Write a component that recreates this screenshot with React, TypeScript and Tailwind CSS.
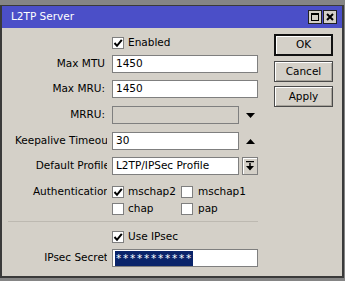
import React from "react";

const font = "font-['DejaVu_Sans',sans-serif]";

function Check({ checked = false }: { checked?: boolean }) {
  return (
    <span className="flex h-[12px] w-[12px] shrink-0 items-center justify-center border border-[#7f7f7f] bg-white">
      {checked && (
        <svg width="10" height="10" viewBox="0 0 10 10">
          <path d="M1.5 5 L4 7.8 L8.8 1.8" fill="none" stroke="#000" strokeWidth="2" />
        </svg>
      )}
    </span>
  );
}

function Label({ text, clip = 0 }: { text: string; clip?: number }) {
  // labels are right aligned and cut at the control column, as Winbox does
  return (
    <div className="flex w-[105px] shrink-0 justify-end overflow-hidden whitespace-nowrap">
      <span style={{ marginRight: clip ? -clip : 2 }}>{text}</span>
    </div>
  );
}

function Field({ value, w = "w-[146px]", disabled = false }: { value?: string; w?: string; disabled?: boolean }) {
  return (
    <div
      className={`flex h-[18px] items-center border border-[#7f7f7f] pl-[3px] ${w} ${
        disabled ? "bg-[#d4d0c8]" : "bg-white"
      }`}
    >
      {value}
    </div>
  );
}

function Btn({ label, main = false, h = "h-[21px]" }: { label: string; main?: boolean; h?: string }) {
  return (
    <div
      className={`flex w-[59px] items-center justify-center ${h} ${
        main
          ? "border-2 border-[#111] shadow-[inset_1px_1px_0_#fff]"
          : "border border-[#4a4a4a] shadow-[inset_1px_1px_0_#fff,inset_-1px_-1px_0_#a8a49c]"
      }`}
    >
      {label}
    </div>
  );
}

export default function App() {
  return (
    <div className={`h-[281px] w-[345px] bg-[#858585] pb-[3px] pr-[1px] pt-[5px] text-[10.5px] text-black ${font}`}>
      <div className="flex h-full flex-col border-x-2 border-b-2 border-t border-[#3a3a3a]">
        {/* Title bar */}
        <div className="flex h-[22px] shrink-0 items-center bg-[#4b4fc8] pl-[9px] pr-[5px] text-white">
          <span className="flex-1 text-[10.5px]">L2TP Server</span>
          <div className="flex gap-[1px]">
            <div className="flex h-[14px] w-[14px] items-center justify-center border border-[#222] bg-[#d4d0c8]">
              <div className="h-[8px] w-[8px] border border-black border-t-2" />
            </div>
            <div className="flex h-[14px] w-[14px] items-center justify-center border border-[#222] bg-[#d4d0c8]">
              <svg width="8" height="8" viewBox="0 0 8 8">
                <path d="M1 1 L7 7 M7 1 L1 7" stroke="#000" strokeWidth="2" />
              </svg>
            </div>
          </div>
        </div>

        {/* Body */}
        <div className="flex flex-1 bg-[#d4d0c8]">
          <div className="flex w-[256px] flex-col">
            <div className="mt-[8px] flex h-[14px] items-center">
              <div className="w-[110px] shrink-0" />
              <Check checked />
              <span className="ml-[4px]">Enabled</span>
            </div>

            <div className="mt-[5px] flex items-center gap-[5px]">
              <Label text="Max MTU" />
              <Field value="1450" />
            </div>

            <div className="mt-[7px] flex items-center gap-[5px]">
              <Label text="Max MRU:" />
              <Field value="1450" />
            </div>

            <div className="mt-[8px] flex items-center gap-[5px]">
              <Label text="MRRU:" />
              <Field w="w-[127px]" disabled />
              <svg className="ml-[2px]" width="9" height="5" viewBox="0 0 9 5">
                <path d="M0 0 H9 L4.5 5 Z" fill="#000" />
              </svg>
            </div>

            <div className="mt-[8px] flex items-center gap-[5px]">
              <Label text="Keepalive Timeout" clip={5} />
              <Field value="30" w="w-[127px]" />
              <svg className="ml-[2px]" width="9" height="5" viewBox="0 0 9 5">
                <path d="M0 5 H9 L4.5 0 Z" fill="#000" />
              </svg>
            </div>

            <div className="mt-[7px] flex items-center gap-[5px]">
              <Label text="Default Profile" clip={3} />
              <Field value="L2TP/IPSec Profile" w="w-[127px]" />
              <div className="-ml-[2px] flex h-[18px] w-[16px] items-center justify-center border border-[#7f7f7f] shadow-[inset_1px_1px_0_#fff]">
                <svg width="8" height="10" viewBox="0 0 8 10">
                  <path d="M0 0.5 H8 M4 2 V5" stroke="#000" strokeWidth="1.5" />
                  <path d="M0 5 H8 L4 9.5 Z" fill="#000" />
                </svg>
              </div>
            </div>

            <div className="mt-[10px] flex h-[14px] items-center gap-[5px]">
              <Label text="Authentication" clip={3} />
              <Check checked />
              <span className="ml-[-1px] w-[48px]">mschap2</span>
              <Check />
              <span>mschap1</span>
            </div>

            <div className="mt-[3px] flex h-[14px] items-center gap-[5px]">
              <div className="w-[105px] shrink-0" />
              <Check />
              <span className="ml-[-1px] w-[48px]">chap</span>
              <Check />
              <span>pap</span>
            </div>

            <div className="ml-[6px] mt-[5px] h-px bg-[#bdb9b1]" />

            <div className="mt-[8px] flex h-[14px] items-center">
              <div className="w-[110px] shrink-0" />
              <Check checked />
              <span className="ml-[4px]">Use IPsec</span>
            </div>

            <div className="mt-[5px] flex items-center gap-[5px]">
              <Label text="IPsec Secret" clip={1} />
              <div className="flex h-[18px] w-[146px] items-center border border-[#7f7f7f] bg-white pl-[2px]">
                <span className="bg-[#0a246a] pl-[1px] leading-[15px] tracking-[1.75px] text-white">***********</span>
              </div>
            </div>
          </div>

          <div className="ml-[16px] flex flex-col">
            <div className="mt-[6px]">
              <Btn label="OK" main h="h-[22px]" />
            </div>
            <div className="mt-[5px]">
              <Btn label="Cancel" />
            </div>
            <div className="mt-[4px]">
              <Btn label="Apply" />
            </div>
          </div>
        </div>
      </div>
    </div>
  );
}
